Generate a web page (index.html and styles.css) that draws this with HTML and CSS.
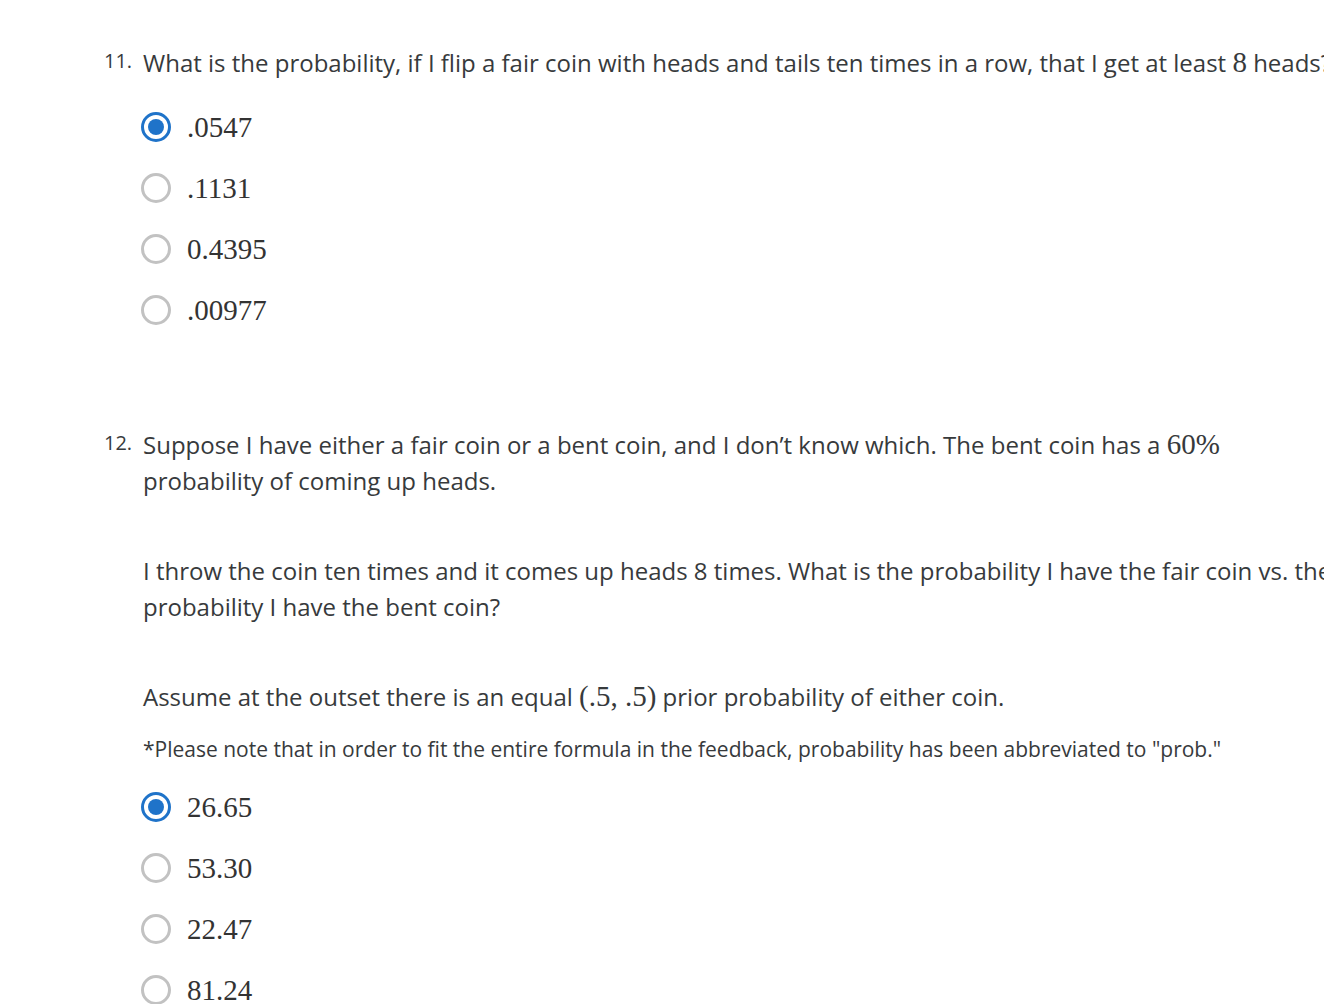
FILE: index.html
```html
<!DOCTYPE html>
<html>
<head>
<meta charset="utf-8">
<link rel="stylesheet" href="styles.css">
</head>
<body>
<div class="page">
  <div class="question q11">
    <div class="qnum">11.</div>
    <div class="qbody">
      <p class="prompt">What is the probability, if I flip a fair coin with heads and tails ten times in a row, that I get at least <span class="math">8</span> heads?</p>
      <div class="options">
        <div class="option"><span class="radio checked"></span><span class="val">.0547</span></div>
        <div class="option"><span class="radio"></span><span class="val">.1131</span></div>
        <div class="option"><span class="radio"></span><span class="val">0.4395</span></div>
        <div class="option"><span class="radio"></span><span class="val">.00977</span></div>
      </div>
    </div>
  </div>
  <div class="question q12">
    <div class="qnum">12.</div>
    <div class="qbody">
      <p class="prompt">Suppose I have either a fair coin or a bent coin, and I don’t know which. The bent coin has a <span class="math">60%</span> probability of coming up heads.</p>
      <p class="prompt gap">I throw the coin ten times and it comes up heads 8 times. What is the probability I have the fair coin vs. the probability I have the bent coin?</p>
      <p class="prompt gap">Assume at the outset there is an equal <span class="math">(.5, .5)</span> prior probability of either coin.</p>
      <p class="note">*Please note that in order to fit the entire formula in the feedback, probability has been abbreviated to "prob."</p>
      <div class="options">
        <div class="option"><span class="radio checked"></span><span class="val">26.65</span></div>
        <div class="option"><span class="radio"></span><span class="val">53.30</span></div>
        <div class="option"><span class="radio"></span><span class="val">22.47</span></div>
        <div class="option"><span class="radio"></span><span class="val">81.24</span></div>
      </div>
    </div>
  </div>
</div>
</body>
</html>
```
FILE: styles.css
```css
html, body {
  margin: 0;
  padding: 0;
  background: #fff;
  overflow: hidden;
}
body {
  font-family: "Open Sans", "Liberation Sans", sans-serif;
  color: #373a3c;
}
.page {
  padding: 45px 0 0 104px;
  width: 1260px;
}
.question {
  display: flex;
}
.q12 {
  margin-top: 96px;
}
.qnum {
  width: 39px;
  flex: none;
  font-size: 20px;
  line-height: 32px;
}
.qbody {
  width: 1198px;
  flex: none;
}
.prompt {
  margin: 0;
  font-size: 24px;
  line-height: 36px;
}
.prompt.gap {
  margin-top: 54px;
}
.math {
  font-family: "Liberation Serif", "DejaVu Serif", serif;
  font-size: 29px;
  line-height: 1;
}
.note {
  margin: 19px 0 0;
  font-size: 21px;
  line-height: 30px;
}
.options {
  margin-top: 25px;
  display: flex;
  flex-direction: column;
  gap: 19px;
}
.q12 .options {
  margin-top: 22px;
}
.option {
  display: flex;
  align-items: center;
  height: 42px;
}
.radio {
  width: 24px;
  height: 24px;
  border: 3px solid #c2c2c2;
  border-radius: 50%;
  margin-left: -2px;
  margin-right: 16px;
  position: relative;
  flex: none;
}
.radio.checked {
  border-color: #1f73c9;
}
.radio.checked::after {
  content: "";
  position: absolute;
  left: 4px;
  top: 4px;
  width: 16px;
  height: 16px;
  border-radius: 50%;
  background: #1f73c9;
}
.val {
  font-family: "Liberation Serif", "DejaVu Serif", serif;
  font-size: 29px;
  color: #333;
}
```
